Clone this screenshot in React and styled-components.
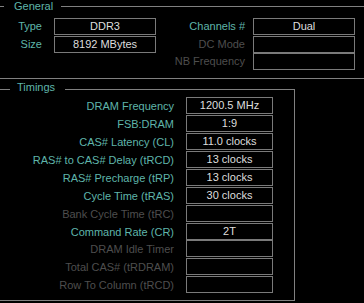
import React from 'react';
import styled, { createGlobalStyle } from 'styled-components';

const Global = createGlobalStyle`
  html, body { margin: 0; padding: 0; background: #000; }
  body {
    width: 364px; height: 303px; overflow: hidden;
    font-family: "Liberation Sans", Arial, sans-serif;
    font-size: 11px;
  }
`;

const Page = styled.div`
  width: 364px;
  height: 303px;
  overflow: hidden;
  background: #000;
  display: flex;
  flex-direction: column;
`;

const Group = styled.section`
  position: relative;
  box-sizing: border-box;
  flex: none;
  margin-left: -6px;
  margin-top: ${p => p.$top}px;
  width: ${p => p.$width}px;
  height: ${p => p.$height}px;
  border: 1px solid #808080;
  padding: ${p => p.$padTop}px 0 0 5px;
`;

const Legend = styled.span`
  position: absolute;
  top: ${p => p.$top}px;
  left: ${p => p.$left}px;
  padding: 0 ${p => p.$padR}px 0 ${p => p.$padL}px;
  background: #000;
  color: #5fb5aa;
  line-height: 13px;
  white-space: nowrap;
`;

const GeneralGrid = styled.div`
  display: grid;
  grid-template-columns: 54px 102px 97px 102px;
  grid-auto-rows: 17px;
  row-gap: 0.5px;
`;

const TimingsGrid = styled.div`
  display: grid;
  grid-template-columns: 186px 87px;
  grid-auto-rows: 17px;
  row-gap: 0.9px;
`;

const Label = styled.div`
  grid-column: ${p => p.$col || 'auto'};
  text-align: right;
  padding-right: ${p => p.$gap}px;
  padding-top: ${p => p.$shift || 0}px;
  line-height: 17px;
  box-sizing: border-box;
  white-space: nowrap;
  color: ${p => (p.$muted ? '#4e4e4e' : '#5fb5aa')};
`;

const Value = styled.div`
  box-sizing: border-box;
  height: 17px;
  border: 1px solid #7a7a7a;
  color: #dedede;
  text-align: center;
  line-height: 15px;
  white-space: nowrap;
`;

const timings = [
  ['DRAM Frequency', '1200.5 MHz'],
  ['FSB:DRAM', '1:9'],
  ['CAS# Latency (CL)', '11.0 clocks'],
  ['RAS# to CAS# Delay (tRCD)', '13 clocks'],
  ['RAS# Precharge (tRP)', '13 clocks'],
  ['Cycle Time (tRAS)', '30 clocks'],
  ['Bank Cycle Time (tRC)', '', true],
  ['Command Rate (CR)', '2T'],
  ['DRAM Idle Timer', '', true],
  ['Total CAS# (tRDRAM)', '', true],
  ['Row To Column (tRCD)', '', true],
];

export default function App() {
  return (
    <Page>
      <Global />
      <Group $top={6} $width={380} $height={73} $padTop={11}>
        <Legend $top={-7} $left={9} $padL={10} $padR={8}>General</Legend>
        <GeneralGrid>
          <Label $gap={12}>Type</Label>
          <Value>DDR3</Value>
          <Label $gap={8}>Channels #</Label>
          <Value>Dual</Value>
          <Label $gap={12}>Size</Label>
          <Value>8192 MBytes</Value>
          <Label $gap={8} $muted>DC Mode</Label>
          <Value />
          <Label $gap={8} $col={3} $muted>NB Frequency</Label>
          <Value />
        </GeneralGrid>
      </Group>
      <Group $top={10} $width={301} $height={212} $padTop={7.3}>
        <Legend $top={-9} $left={15} $padL={7} $padR={10}>Timings</Legend>
        <TimingsGrid>
          {timings.map(([label, value, muted]) => (
            <React.Fragment key={label}>
              <Label $gap={12} $shift={1} $muted={muted}>{label}</Label>
              <Value>{value}</Value>
            </React.Fragment>
          ))}
        </TimingsGrid>
      </Group>
    </Page>
  );
}
